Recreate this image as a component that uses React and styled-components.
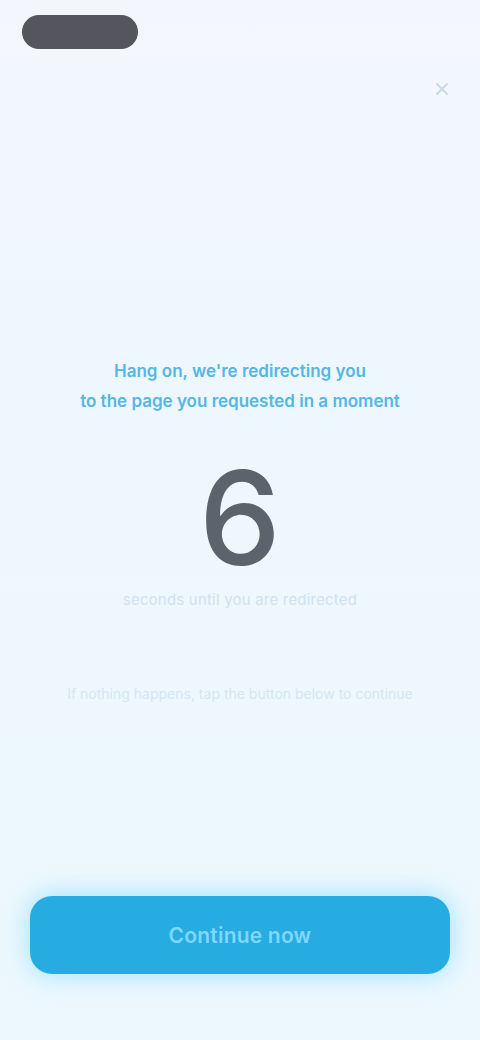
import React, { useState } from 'react';
import styled, { createGlobalStyle } from 'styled-components';

const GlobalStyle = createGlobalStyle`
  html, body {
    margin: 0;
    padding: 0;
    background: #eef7fd;
    font-family: Inter, "Noto Sans", "Liberation Sans", sans-serif;
  }
`;

const Screen = styled.div`
  width: 480px;
  height: 1040px;
  box-sizing: border-box;
  display: flex;
  flex-direction: column;
  background: linear-gradient(180deg, #f4f6fd 0%, #eef7fd 35%, #ecf8fe 100%);
  overflow: hidden;
`;

const TopBar = styled.div`
  display: flex;
  justify-content: space-between;
  align-items: flex-start;
  padding: 14px 22px 0 22px;
  height: 100px;
  box-sizing: border-box;
`;

const Pill = styled.div`
  width: 116px;
  height: 34px;
  border-radius: 17px;
  background: #55555d;
  margin-top: 1px;
`;

const CloseButton = styled.button`
  margin-top: 62px;
  width: 32px;
  height: 26px;
  border: none;
  background: transparent;
  padding: 0;
  display: flex;
  align-items: center;
  justify-content: center;
  color: #c5dbe8;
`;

const Content = styled.main`
  flex: 1;
  display: flex;
  flex-direction: column;
  align-items: center;
  padding-top: 256px;
`;

const Title = styled.h1`
  margin: 0;
  text-align: center;
  font-size: 17px;
  line-height: 30px;
  font-weight: 600;
  color: #56b6e4;
  white-space: nowrap;
`;

const Count = styled.div`
  margin-top: 46px;
  font-size: 130px;
  line-height: 112px;
  font-weight: 500;
  color: #5d636c;
`;

const Caption = styled.div`
  margin-top: 16px;
  font-size: 15px;
  line-height: 20px;
  color: #cfe2ee;
  letter-spacing: 0.2px;
`;

const Note = styled.p`
  margin: 74px 0 0;
  text-align: center;
  font-size: 14px;
  line-height: 20px;
  color: #d4e6f3;
  white-space: nowrap;
`;

const Footer = styled.div`
  padding: 0 30px 66px;
`;

const PrimaryButton = styled.button`
  width: 100%;
  height: 78px;
  border: none;
  border-radius: 22px;
  background: #27ace2;
  box-shadow: 0 0 26px rgba(90, 205, 255, 0.55);
  color: #7fd8fb;
  font-family: inherit;
  font-size: 21px;
  font-weight: 600;
  letter-spacing: 0.2px;
`;

export default function App() {
  const [seconds, setSeconds] = useState(6);

  return (
    <Screen>
      <GlobalStyle />
      <TopBar>
        <Pill />
        <CloseButton aria-label="Close">
          <svg width="20" height="20" viewBox="0 0 24 24" fill="none" stroke="currentColor" strokeWidth="2.4" strokeLinecap="round">
            <path d="M6 6l12 12M18 6L6 18" />
          </svg>
        </CloseButton>
      </TopBar>
      <Content>
        <Title>
          Hang on, we're redirecting you
          <br />
          to the page you requested in a moment
        </Title>
        <Count>{seconds}</Count>
        <Caption>seconds until you are redirected</Caption>
        <Note>If nothing happens, tap the button below to continue</Note>
      </Content>
      <Footer>
        <PrimaryButton onClick={() => setSeconds(0)}>Continue now</PrimaryButton>
      </Footer>
    </Screen>
  );
}
